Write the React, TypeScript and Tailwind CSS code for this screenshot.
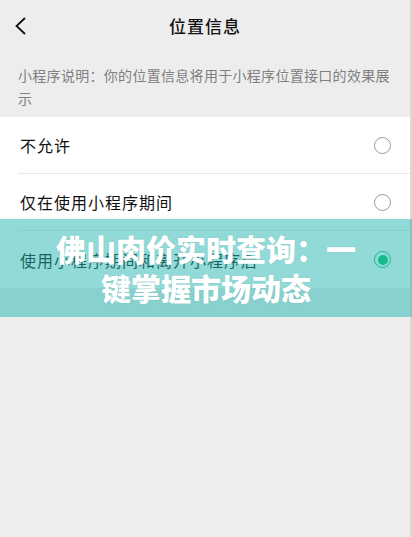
import React, { useState } from "react";

const options = [
  "不允许",
  "仅在使用小程序期间",
  "使用小程序期间和离开小程序后",
];

const Radio = ({ checked }: { checked: boolean }) =>
  checked ? (
    <span className="flex h-[17px] w-[17px] items-center justify-center rounded-full border-[1.5px] border-[#07c160]">
      <span className="h-[10px] w-[10px] rounded-full bg-[#07c160]" />
    </span>
  ) : (
    <span className="h-[17px] w-[17px] rounded-full border-[1.5px] border-[#9a9a9a]" />
  );

const App = () => {
  const [selected, setSelected] = useState(2);

  return (
    <div
      className="relative h-[537px] w-full overflow-hidden bg-[#ededed]"
      style={{ fontFamily: '"Noto Sans CJK SC", "Noto Sans", sans-serif' }}
    >
      <div className="flex h-full border-r-2 border-[#d9d9d9]">
        <div className="flex-1">
          {/* header */}
          <div className="relative flex h-[52px] items-center justify-center">
            <svg
              className="absolute left-[13px] top-[16px]"
              width="16"
              height="20"
              viewBox="0 0 16 20"
              fill="none"
            >
              <path d="M12 2 L3.5 10 L12 18" stroke="#111" strokeWidth="1.8" />
            </svg>
            <h1 className="text-[17px] font-medium tracking-[1px] text-[#111]">位置信息</h1>
          </div>

          {/* description */}
          <p className="px-[18px] pb-[7px] pt-[12px] text-[14px] leading-[23px] tracking-[0.3px] text-[#7f7f7f]">
            小程序说明：你的位置信息将用于小程序位置接口的效果展示
          </p>

          {/* options */}
          <div className="bg-white">
            {options.map((label, i) => (
              <button
                key={label}
                onClick={() => setSelected(i)}
                className="flex h-[57px] w-full pl-[18px] text-left"
              >
                <div
                  className={
                    "flex flex-1 items-center justify-between pr-[19px] " +
                    (i < options.length - 1 ? "border-b border-[#e8e8e8]" : "")
                  }
                >
                  <span className="pl-[2px] text-[16px] tracking-[1px] text-[#111]">{label}</span>
                  <Radio checked={selected === i} />
                </div>
              </button>
            ))}
          </div>
        </div>
      </div>

      {/* banner overlay */}
      <div className="absolute left-0 right-0 top-[219px] flex h-[98px] items-center justify-center bg-[rgba(35,181,177,0.5)]">
        <h2
          className="text-center text-[30px] font-black leading-[39px] text-white"
          style={{ textShadow: "0 0 2px rgba(0,0,0,0.08)" }}
        >
          佛山肉价实时查询：一
          <br />
          键掌握市场动态
        </h2>
      </div>
    </div>
  );
};

export default App;
